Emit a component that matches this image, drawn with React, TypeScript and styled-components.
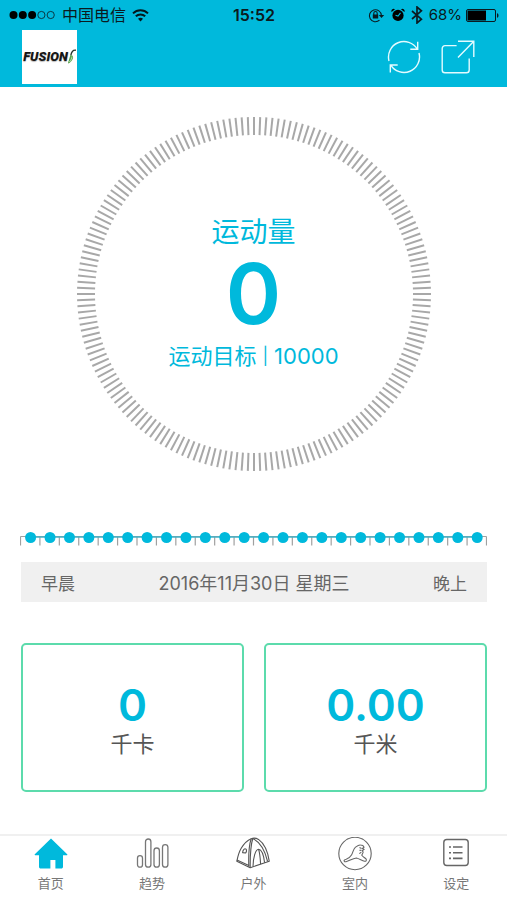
import React from "react";
import styled, { createGlobalStyle } from "styled-components";

const CYAN = "#00b9dc";
const INK = "#0b1a20";

const GlobalStyle = createGlobalStyle`
  *, *::before, *::after { box-sizing: border-box; }
  body {
    margin: 0;
    background: #fff;
    font-family: Inter, "Noto Sans CJK SC", sans-serif;
    color: #555;
  }
`;

const Page = styled.div`
  min-height: 100vh;
  display: flex;
  flex-direction: column;
`;

const Header = styled.header`
  background: ${CYAN};
`;

const StatusBar = styled.div`
  display: grid;
  grid-template-columns: 1fr auto 1fr;
  align-items: center;
  height: 30px;
  padding: 0 8px 0 9px;
  color: ${INK};
  font-size: 16px;
  line-height: 30px;
`;

const StatusGroup = styled.div<{ $end?: boolean }>`
  display: flex;
  align-items: center;
  gap: 6px;
  justify-content: ${(p) => (p.$end ? "flex-end" : "flex-start")};
`;

const Clock = styled.time`
  font-weight: 600;
`;

const Battery = styled.span`
  display: flex;
  align-items: center;
  gap: 4px;
  font-size: 15px;
`;

const NavBar = styled.div`
  display: flex;
  align-items: center;
  justify-content: space-between;
  height: 57px;
  padding: 0 32px 3px 22px;
`;

const Logo = styled.div`
  display: flex;
  align-items: center;
  justify-content: center;
  width: 55px;
  height: 54px;
  background: #fff;
  color: #161616;
  font: italic 900 13px/14px Roboto, sans-serif;
  text-shadow: 0 1px 1px #bbb;
`;

const NavActions = styled.div`
  display: flex;
  gap: 20px;
`;

const IconButton = styled.button`
  display: flex;
  padding: 0;
  border: 0;
  background: none;
  color: #e4fbff;
  cursor: pointer;
`;

const Main = styled.main`
  flex: 1;
  display: flex;
  flex-direction: column;
  padding: 30px 20px 42px;
`;

const Dial = styled.section`
  display: grid;
  align-self: center;
  width: 100%;
  max-width: 354px;
  & > * { grid-area: 1 / 1; }
`;

const DialText = styled.div`
  display: flex;
  flex-direction: column;
  align-items: center;
  align-self: center;
  color: ${CYAN};
`;

const DialTitle = styled.h1`
  margin: 0;
  font-size: 28px;
  line-height: 36px;
  font-weight: 400;
`;

const DialValue = styled.div`
  font-size: 84px;
  line-height: 88px;
  font-weight: 600;
`;

const DialGoal = styled.div`
  display: flex;
  align-items: center;
  gap: 6px;
  font-size: 22px;
  line-height: 36px;
`;

const Divider = styled.span`
  font-size: 17px;
`;

const Timeline = styled.svg`
  display: block;
  width: 100%;
  margin-top: 60px;
`;

const DayBar = styled.div`
  display: flex;
  align-items: center;
  justify-content: space-between;
  height: 40px;
  margin: 15px 0 0 1px;
  padding: 0 20px;
  background: #f0f0f0;
  color: #666;
  font-size: 17px;
`;

const DayDate = styled.time`
  font-size: 18px;
`;

const Cards = styled.section`
  display: grid;
  grid-template-columns: 1fr 1fr;
  gap: 20px;
  margin: 41px 0 0 1px;
`;

const Card = styled.div`
  display: flex;
  flex-direction: column;
  align-items: center;
  justify-content: center;
  height: 149px;
  padding-top: 6px;
  border: 2px solid #5cdbac;
  border-radius: 5px;
`;

const CardValue = styled.div`
  color: ${CYAN};
  font-size: 44px;
  line-height: 46px;
  font-weight: 600;
`;

const CardUnit = styled.div`
  font-size: 22px;
  line-height: 32px;
`;

const TabBar = styled.nav`
  display: grid;
  grid-template-columns: repeat(5, 1fr);
  height: 67px;
  padding-top: 1px;
  border-top: 2px solid #f0f0f0;
`;

const Tab = styled.a`
  display: flex;
  flex-direction: column;
  align-items: center;
  gap: 2px;
  color: #777;
  font-size: 13px;
  line-height: 20px;
  text-decoration: none;
`;

const SignalDots = () => (
  <svg width="47" height="10" viewBox="0 0 47 10" aria-label="信号">
    {[0, 1, 2, 3, 4].map((i) => (
      <circle
        key={i}
        cx={4.5 + i * 9.3}
        cy="5"
        r={i < 3 ? 4 : 3.6}
        fill={i < 3 ? "#000" : "none"}
        stroke={i < 3 ? "none" : INK}
        strokeWidth="0.8"
      />
    ))}
  </svg>
);

const WifiIcon = () => (
  <svg width="17" height="13" viewBox="0 0 17 13" fill="none" stroke="#04161c" strokeWidth="2">
    <path d="M1 4.4C5.2.3 11.8.3 16 4.4M3.8 7.3c2.7-2.5 6.7-2.5 9.4 0" />
    <path d="M8.5 12.5 6 9.8c1.4-1.3 3.6-1.3 5 0z" fill="#04161c" stroke="none" />
  </svg>
);

const LockIcon = () => (
  <svg width="17" height="15" viewBox="0 0 17 15" fill="none" stroke={INK}>
    <path d="M11.5 12.2A6 6 0 1 1 13.4 7.5" strokeWidth="1.1" />
    <path d="M10.8 7h5.4l-2.7 3z" fill={INK} stroke="none" />
    <rect x="4.8" y="6.5" width="5.4" height="4" fill={INK} stroke="none" />
    <path d="M5.8 7V5.2a1.7 1.7 0 0 1 3.4 0V7" strokeWidth="1.1" />
  </svg>
);

const AlarmIcon = () => (
  <svg width="14" height="14" viewBox="0 0 14 14">
    <circle cx="7" cy="7.4" r="5.6" />
    <path d="M.6 4A2.3 2.3 0 0 1 4 1.2zM13.4 4A2.3 2.3 0 0 0 10 1.2z" />
    <path d="M9.5 4.8 7 8 4.5 7.2" fill="none" stroke={CYAN} strokeWidth="1.1" />
  </svg>
);

const BluetoothIcon = () => (
  <svg width="12" height="18" viewBox="0 0 12 18" fill="none" stroke={INK} strokeWidth="1.7">
    <path d="m1 5 9.4 8.2L6 17V1l4.4 3.8L1 13" />
  </svg>
);

const BatteryIcon = () => (
  <svg width="33" height="13" viewBox="0 0 33 13" aria-hidden="true">
    <rect x=".5" y=".5" width="29" height="12" rx="1.5" fill="none" stroke={INK} />
    <rect x="1.5" y="1.5" width="18.5" height="10" fill="#000" />
    <path d="M31 4.2c2 .5 2 4.1 0 4.6z" fill={INK} />
  </svg>
);

const RefreshIcon = () => (
  <svg width="34" height="34" viewBox="0 0 34 34" fill="none" stroke="currentColor" strokeWidth="1.4">
    <path d="M2 21A15.5 15.5 0 0 1 30.3 9.1M30.7 1.8v7.4h-7.4" />
    <path d="M32 13A15.5 15.5 0 0 1 3.7 24.9M3.3 32.4V25h7.4" />
  </svg>
);

const ShareIcon = () => (
  <svg width="34" height="34" viewBox="0 0 34 34" fill="none" stroke="currentColor" strokeWidth="1.4">
    <path d="M15.6 5.6H4A2.8 2.8 0 0 0 1.2 8.4V30A2.8 2.8 0 0 0 4 32.8h21.4a2.8 2.8 0 0 0 2.8-2.8V18.4" />
    <path d="M17 1.2h15.8V17M32.6 1.4 17 17.6" />
  </svg>
);

const LogoLeaf = () => (
  <svg width="8" height="16" viewBox="1 0 8 16" fill="none" aria-hidden="true">
    <path d="M9 1.2C6.5.8 4.5 2.6 3.8 6.5" stroke="#26332a" strokeWidth="1.4" />
    <path d="M3.2 6.4C7.2 5.2 7.2 10.8 2.4 14 .5 15.2 1 13.5 1.6 12z" fill="#57a34a" />
    <path d="M5 7.5C4.8 9.6 3.8 11.4 2.4 13" stroke="#dff0d8" strokeWidth=".7" />
  </svg>
);

const DialTicks = () => (
  <svg viewBox="-177 -177 354 354" width="100%" aria-hidden="true" stroke="#a8a8a8" strokeWidth="2">
    {Array.from({ length: 180 }, (_, i) => (
      <line key={i} y1="-177" y2="-159" transform={`rotate(${i * 2})`} />
    ))}
  </svg>
);

const HomeIcon = () => (
  <svg width="34" height="34" viewBox="0 0 34 34" fill={CYAN}>
    <path d="M17 1.5.8 17.2c-.5.7 0 1 .8 1H5v11.4c0 1.4.6 2 2 2h9.400v-8.600h5v8.600H27c1.400 0 2-.6 2-2V18.200h3.500c.8 0 1.200-.4.700-1z" />
  </svg>
);

const TrendIcon = () => (
  <svg width="34" height="34" viewBox="0 0 34 34" fill="none" stroke="#777" strokeWidth="1.3">
    <rect x="2.5" y="18.6" width="5" height="11.6" rx="2.5" />
    <rect x="10.5" y="2" width="5.400" height="28.2" rx="2.7" />
    <rect x="19" y="11" width="5.400" height="19.2" rx="2.7" />
    <rect x="27.5" y="7.600" width="5.400" height="22.6" rx="2.7" />
  </svg>
);

const TentIcon = () => (
  <svg width="34" height="34" viewBox="0 0 34 34" fill="none" stroke="#555" strokeWidth="1.1" strokeLinejoin="round">
    <path d="M.8 24.300C2 18.500 3 15 5.200 11.300 8 6.500 11.500 3.200 15.200 1.700c2.500-.9 5-.6 7.300.7C29 7 31.800 14.500 33.300 24.300L14.200 30.700z" />
    <path d="M15.200 1.700C12.600 9 12.500 20 12.800 29.800M16.800 1.500C14.400 9 14.100 20 14.200 30.700M16.800 1.500C24 5 29 13.500 31.600 24.500" />
    <path d="M17 29.500c.2-9 2.400-17 5.600-17.200 3.300.4 5.200 6.600 6 13.400M22.600 12.300c1.300 4 1.700 9 2 14.800M.9 23l12 5.600" />
    <path d="M6.600 15.600c.2-3 2.200-4.600 3.400-3.400.9 1 .5 3-.4 3.800z" />
  </svg>
);

const IndoorIcon = () => (
  <svg width="34" height="34" viewBox="0 0 34 34" fill="none" stroke="#666" strokeWidth="1.1" strokeLinejoin="round">
    <circle cx="17" cy="16.5" r="16.2" />
    <path d="M6.500 24.600c-1.200-1 .3-2 1.700-2.400 2.400-.8 4-2 5.300-4.200 1.600-2.800 1.800-6 3.800-7.600 1.600-1.200 3.200-2.800 5.200-2.400 1.800.1 3.300 1 3.500 2.400l-1.800 1 2 1-2 1.400 1 1.200c-.3 1.500-1.200 2.300-1.400 3.300 1 1.500 2.900 2.300 4.200 3.600.9 1.200 0 2.800-1.400 2.300-3-1-5.400-2.400-8.200-3.200-4.300.5-7 3-10.400 3.700z" />
    <path d="m21.500 10.400 2 1m-2 2 2-.2m-2.200 3.400 2-1.400" />
  </svg>
);

const SettingsIcon = () => (
  <svg width="34" height="34" viewBox="0 0 34 34" fill="none" stroke="#666">
    <rect x="4.800" y="2.500" width="24.400" height="26" rx="3" strokeWidth="1.4" />
    <path d="M14 10h9.500M14 15.700h9.500M14 21.400h9.500" strokeWidth="1.6" />
    <path d="M10 10h2M10 15.700h2M10 21.400h2" strokeWidth="1.6" />
  </svg>
);

const HOURS = 24;
const SLOT = 466 / HOURS;

const HourTimeline = () => (
  <Timeline viewBox="0 0 467 16" role="img" aria-label="每小时运动量">
    <path
      d={`M.5 5.5H466.5${Array.from({ length: HOURS + 1 }, (_, i) => `M${0.5 + i * SLOT} 5.5v9`).join("")}`}
      fill="none"
      stroke="#a0a0a0"
      strokeWidth="1.2"
    />
    <path d={`M${SLOT / 2} 6H${466 - SLOT / 2}`} stroke="#42b1c6" strokeWidth="1.5" />
    {Array.from({ length: HOURS }, (_, i) => (
      <circle key={i} cx={0.9 + SLOT / 2 + i * SLOT} cy="6.5" r="5.5" fill={CYAN} />
    ))}
  </Timeline>
);

const tabs = [
  { label: "首页", Icon: HomeIcon },
  { label: "趋势", Icon: TrendIcon },
  { label: "户外", Icon: TentIcon },
  { label: "室内", Icon: IndoorIcon },
  { label: "设定", Icon: SettingsIcon },
];

const stats = [
  { value: "0", unit: "千卡" },
  { value: "0.00", unit: "千米" },
];

export default function App() {
  return (
    <Page>
      <GlobalStyle />
      <Header>
        <StatusBar>
          <StatusGroup>
            <SignalDots />
            <span>中国电信</span>
            <WifiIcon />
          </StatusGroup>
          <Clock>15:52</Clock>
          <StatusGroup $end>
            <LockIcon />
            <AlarmIcon />
            <BluetoothIcon />
            <Battery>
              68%
              <BatteryIcon />
            </Battery>
          </StatusGroup>
        </StatusBar>
        <NavBar>
          <Logo>
            FUSION
            <LogoLeaf />
          </Logo>
          <NavActions>
            <IconButton type="button" aria-label="刷新">
              <RefreshIcon />
            </IconButton>
            <IconButton type="button" aria-label="分享">
              <ShareIcon />
            </IconButton>
          </NavActions>
        </NavBar>
      </Header>
      <Main>
        <Dial>
          <DialTicks />
          <DialText>
            <DialTitle>运动量</DialTitle>
            <DialValue>0</DialValue>
            <DialGoal>
              <span>运动目标</span>
              <Divider>|</Divider>
              <span>10000</span>
            </DialGoal>
          </DialText>
        </Dial>
        <HourTimeline />
        <DayBar>
          <span>早晨</span>
          <DayDate dateTime="2016-11-30">2016年11月30日 星期三</DayDate>
          <span>晚上</span>
        </DayBar>
        <Cards>
          {stats.map((s) => (
            <Card key={s.unit}>
              <CardValue>{s.value}</CardValue>
              <CardUnit>{s.unit}</CardUnit>
            </Card>
          ))}
        </Cards>
      </Main>
      <TabBar>
        {tabs.map(({ label, Icon }) => (
          <Tab key={label} href="#">
            <Icon />
            {label}
          </Tab>
        ))}
      </TabBar>
    </Page>
  );
}
